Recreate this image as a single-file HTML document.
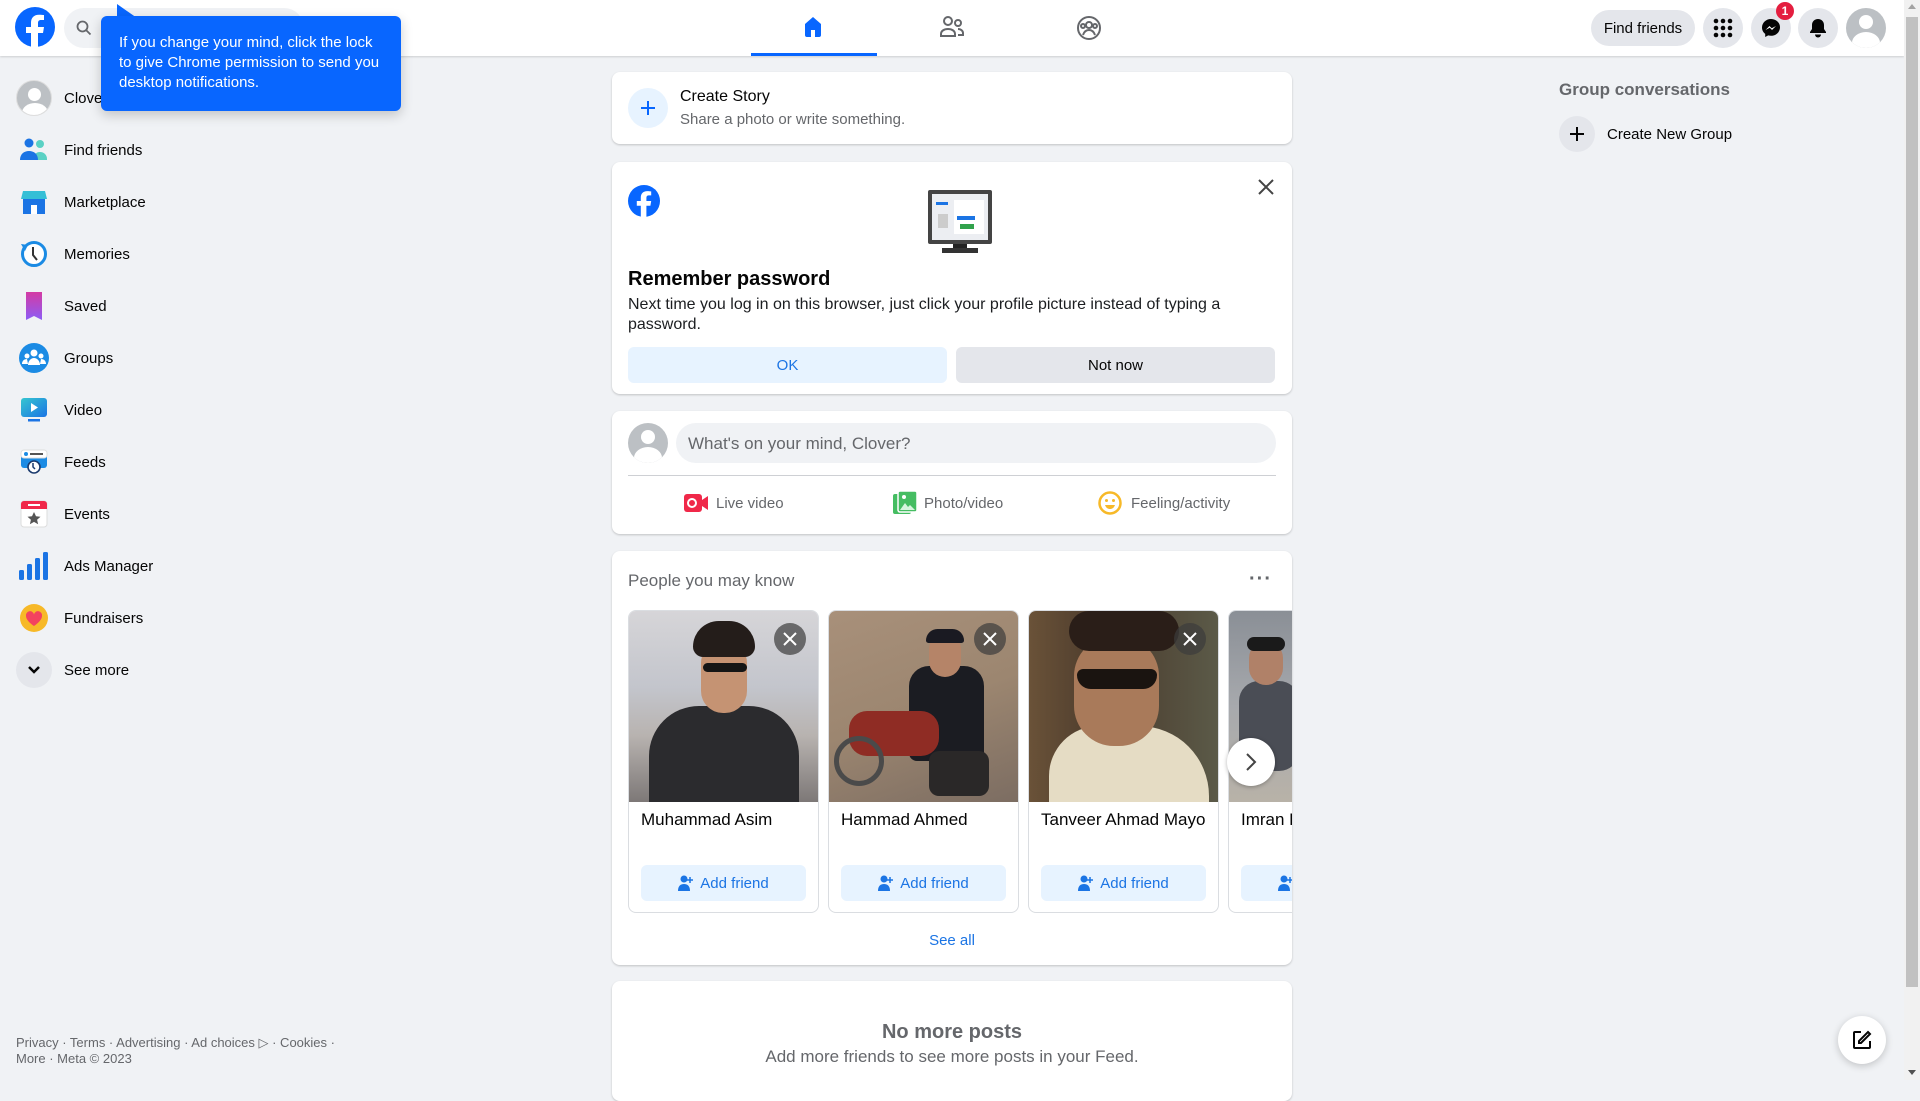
<!DOCTYPE html>
<html><head><meta charset="utf-8"><style>
*{box-sizing:border-box;margin:0;padding:0}
body{width:1920px;height:1080px;overflow:hidden;background:#f0f2f5;font-family:"Liberation Sans",sans-serif;color:#050505;position:relative}
.a{position:absolute}
.hdr{left:0;top:0;width:1904px;height:56px;background:#fff;box-shadow:0 1px 2px rgba(0,0,0,.15)}
.circ{border-radius:50%;background:#e4e6eb;width:40px;height:40px;display:flex;align-items:center;justify-content:center}
.card{background:#fff;border-radius:8px;box-shadow:0 1px 2px rgba(0,0,0,.2);left:612px;width:680px}
.side{left:16px;height:52px;display:flex;align-items:center;font-size:15px}
.side .ic{width:36px;height:36px;margin-right:12px;display:flex;align-items:center;justify-content:center}
.pc{top:610px;width:191px;height:303px;border:1px solid #dadde1;border-radius:8px;overflow:hidden;background:#fff}
.pc .img{height:191px;position:relative;overflow:hidden}
.pc .nm{font-size:17px;padding:8px 12px;white-space:nowrap}
.pc .btn{position:absolute;left:12px;right:12px;top:254px;height:36px;background:#e7f3ff;border-radius:6px;color:#1b74e4;font-size:15px;display:flex;align-items:center;justify-content:center;gap:6px}
.x{position:absolute;right:12px;top:12px;width:32px;height:32px;border-radius:50%;background:rgba(60,60,60,.7);display:flex;align-items:center;justify-content:center}
.act{font-size:15px;color:#65676b}
</style></head><body>

<div class="a hdr"></div>
<svg class="a" style="left:15px;top:7px" width="40" height="40" viewBox="0 0 40 40"><circle cx="20" cy="20" r="20" fill="#0866ff"/><path d="M23 40V26h5l1-6h-6v-4c0-2 1-3 3-3h3V8c-1 0-3-.3-5-.3-5 0-8 3-8 8V20h-5v6h5v14z" fill="#fff"/></svg>
<div class="a" style="left:64px;top:8px;width:240px;height:40px;border-radius:20px;background:#f0f2f5"></div>
<svg class="a" style="left:76px;top:20px" width="16" height="16" viewBox="0 0 16 16"><circle cx="6.5" cy="6.5" r="5" fill="none" stroke="#65676b" stroke-width="1.8"/><path d="M10 10l4.5 4.5" stroke="#65676b" stroke-width="1.8"/></svg>

<div class="a" style="left:751px;top:53px;width:126px;height:3px;background:#0866ff"></div>
<svg class="a" style="left:801px;top:15px" width="24" height="24" viewBox="0 0 24 24"><path d="M12 2 4 9v11a2 2 0 0 0 2 2h4v-6h4v6h4a2 2 0 0 0 2-2V9z" fill="#0866ff"/><rect x="10" y="15" width="4" height="7" fill="#fff"/></svg>
<svg class="a" style="left:939px;top:15px" width="26" height="24" viewBox="0 0 26 24" fill="none" stroke="#65676b" stroke-width="2"><circle cx="9" cy="6" r="4"/><path d="M2 21v-2c0-3 3-5 7-5s7 2 7 5v2z"/><circle cx="19" cy="8" r="3"/><path d="M19 14c3 0 5 2 5 4v2h-5"/></svg>
<svg class="a" style="left:1076px;top:15px" width="26" height="26" viewBox="0 0 26 26" fill="none" stroke="#65676b" stroke-width="2"><circle cx="13" cy="13" r="11"/><circle cx="13" cy="10" r="3"/><circle cx="7" cy="11" r="2"/><circle cx="19" cy="11" r="2"/><path d="M7 20c1-3 3-5 6-5s5 2 6 5"/></svg>

<div class="a" style="left:1591px;top:10px;width:104px;height:36px;border-radius:18px;background:#e4e6eb;font-size:15px;display:flex;align-items:center;justify-content:center">Find friends</div>
<div class="a circ" style="left:1703px;top:8px"><svg width="20" height="20" viewBox="0 0 20 20" fill="#050505"><circle cx="3" cy="3" r="2.3"/><circle cx="10" cy="3" r="2.3"/><circle cx="17" cy="3" r="2.3"/><circle cx="3" cy="10" r="2.3"/><circle cx="10" cy="10" r="2.3"/><circle cx="17" cy="10" r="2.3"/><circle cx="3" cy="17" r="2.3"/><circle cx="10" cy="17" r="2.3"/><circle cx="17" cy="17" r="2.3"/></svg></div>
<div class="a circ" style="left:1751px;top:8px"><svg width="20" height="20" viewBox="0 0 20 20"><path d="M10 1C5 1 1 4.8 1 9.5c0 2.6 1.2 4.9 3.2 6.4V19l3-1.6c.9.2 1.8.4 2.8.4 5 0 9-3.8 9-8.5S15 1 10 1z" fill="#050505"/><path d="M4.5 12l4-4 2.2 2.2L15 8l-4 4-2.2-2.2z" fill="#fff"/></svg></div>
<div class="a" style="left:1776px;top:2px;width:18px;height:18px;border-radius:50%;background:#e41e3f;color:#fff;font-size:12px;font-weight:bold;display:flex;align-items:center;justify-content:center">1</div>
<div class="a circ" style="left:1798px;top:8px"><svg width="20" height="20" viewBox="0 0 20 20" fill="#050505"><path d="M10 1c-3.5 0-6 2.6-6 6v4l-2 3v1h16v-1l-2-3V7c0-3.4-2.5-6-6-6z"/><path d="M7 16.5a3 3 0 0 0 6 0z"/></svg></div>
<div class="a" style="left:1846px;top:8px;width:40px;height:40px;border-radius:50%;background:#bcc0c4;overflow:hidden"><div class="a" style="left:13px;top:7px;width:14px;height:14px;border-radius:50%;background:#fff"></div><div class="a" style="left:6px;top:24px;width:28px;height:22px;border-radius:50%;background:#fff"></div></div>

<div class="a" style="left:1904px;top:0;width:16px;height:1080px;background:#f1f1f1"></div>
<div class="a" style="left:1906px;top:17px;width:12px;height:970px;background:#c1c1c1"></div>
<div class="a" style="left:1908px;top:4px;width:0;height:0;border-left:4px solid transparent;border-right:4px solid transparent;border-bottom:5px solid #a3a3a3"></div>
<div class="a" style="left:1908px;top:1070px;width:0;height:0;border-left:4px solid transparent;border-right:4px solid transparent;border-top:5px solid #505050"></div>

<div class="a side" style="top:72px"><div class="ic"><div style="width:36px;height:36px;border-radius:50%;background:#bcc0c4;position:relative;overflow:hidden;border:1px solid #ddd"><div class="a" style="left:11px;top:7px;width:13px;height:13px;border-radius:50%;background:#fff"></div><div class="a" style="left:5px;top:22px;width:26px;height:20px;border-radius:50%;background:#fff"></div></div></div>Clover</div>
<div class="a side" style="top:124px"><div class="ic"><svg width="28" height="24" viewBox="0 0 28 24"><circle cx="20" cy="6" r="4" fill="#5ad1c4"/><path d="M13 22c0-5 3-8 7-8s7 3 7 7v1z" fill="#5ad1c4"/><circle cx="9" cy="5" r="4.5" fill="#1b74e4"/><path d="M0 22c0-6 4-9 9-9s9 3 9 9z" fill="#1b74e4"/></svg></div>Find friends</div>
<div class="a side" style="top:176px"><div class="ic"><svg width="26" height="26" viewBox="0 0 26 26"><path d="M2 2h22l2 8H0z" fill="#35bfd6"/><rect x="2" y="10" width="22" height="15" fill="#1b74e4"/><rect x="10" y="16" width="6" height="9" fill="#fff"/></svg></div>Marketplace</div>
<div class="a side" style="top:228px"><div class="ic"><svg width="28" height="28" viewBox="0 0 28 28"><circle cx="14" cy="14" r="11.5" fill="#fff" stroke="#1b8be4" stroke-width="3"/><path d="M13 7v8l4 5" stroke="#333" stroke-width="2" fill="none"/><path d="M1 4l7 1-3 6z" fill="#1b8be4"/></svg></div>Memories</div>
<div class="a side" style="top:280px"><div class="ic"><svg width="20" height="28" viewBox="0 0 20 28"><defs><linearGradient id="sv" x1="0" y1="0" x2="0" y2="1"><stop offset="0" stop-color="#d43ba4"/><stop offset="1" stop-color="#8c5cf6"/></linearGradient></defs><path d="M2 0h16v28l-8-4-8 4z" fill="url(#sv)"/></svg></div>Saved</div>
<div class="a side" style="top:332px"><div class="ic"><svg width="30" height="30" viewBox="0 0 30 30"><circle cx="15" cy="15" r="15" fill="#1b8be4"/><circle cx="15" cy="10" r="3.5" fill="#fff"/><circle cx="8" cy="13" r="2.5" fill="#fff"/><circle cx="22" cy="13" r="2.5" fill="#fff"/><path d="M9 22c0-4 3-7 6-7s6 3 6 7z" fill="#fff"/><path d="M3 21c0-3 2-5 5-5l1 5z M27 21c0-3-2-5-5-5l-1 5z" fill="#fff"/></svg></div>Groups</div>
<div class="a side" style="top:384px"><div class="ic"><svg width="28" height="26" viewBox="0 0 28 26"><defs><linearGradient id="vd" x1="0" y1="0" x2="1" y2="1"><stop offset="0" stop-color="#35c6d0"/><stop offset="1" stop-color="#1b74e4"/></linearGradient></defs><rect x="1" y="1" width="26" height="19" rx="3" fill="url(#vd)"/><path d="M11 6v9l7-4.5z" fill="#fff"/><rect x="8" y="22" width="12" height="2.5" fill="#1b74e4"/></svg></div>Video</div>
<div class="a side" style="top:436px"><div class="ic"><svg width="28" height="28" viewBox="0 0 28 28"><rect x="1" y="2" width="26" height="18" rx="3" fill="#1b8be4"/><rect x="1" y="2" width="26" height="8" rx="3" fill="#fff" stroke="#ddd"/><circle cx="6" cy="6" r="2" fill="#1b8be4"/><rect x="10" y="5" width="13" height="2" fill="#555"/><circle cx="14" cy="19" r="6" fill="#fff" stroke="#1c3b6e" stroke-width="1.6"/><path d="M13 15v4l2 2" stroke="#1c3b6e" stroke-width="1.5" fill="none"/></svg></div>Feeds</div>
<div class="a side" style="top:488px"><div class="ic"><svg width="28" height="28" viewBox="0 0 28 28"><rect x="1" y="1" width="26" height="26" rx="3" fill="#fff" stroke="#ddd"/><path d="M1 4a3 3 0 0 1 3-3h20a3 3 0 0 1 3 3v5H1z" fill="#f02849"/><rect x="8" y="4" width="12" height="2" fill="#fff"/><path d="M14 12l2 4.3 4.5.5-3.4 3 1 4.5-4.1-2.4-4.1 2.4 1-4.5-3.4-3 4.5-.5z" fill="#555"/></svg></div>Events</div>
<div class="a side" style="top:540px"><div class="ic"><svg width="30" height="28" viewBox="0 0 30 28" fill="#1b74e4"><rect x="0" y="18" width="5" height="10" rx="1.5"/><rect x="8" y="12" width="5" height="16" rx="1.5"/><rect x="16" y="6" width="5" height="22" rx="1.5"/><rect x="24" y="0" width="5" height="28" rx="1.5"/></svg></div>Ads Manager</div>
<div class="a side" style="top:592px"><div class="ic"><svg width="30" height="30" viewBox="0 0 30 30"><circle cx="15" cy="15" r="14" fill="#f7b928"/><path d="M15 23s-8-5-8-10a4 4 0 0 1 8-1.5A4 4 0 0 1 23 13c0 5-8 10-8 10z" fill="#f3425f"/></svg></div>Fundraisers</div>
<div class="a side" style="top:644px"><div class="ic"><div class="circ" style="width:36px;height:36px"><svg width="14" height="10" viewBox="0 0 14 10"><path d="M2 2l5 5 5-5" stroke="#050505" stroke-width="2.5" fill="none"/></svg></div></div>See more</div>

<div class="a" style="left:16px;top:1035px;font-size:13px;color:#65676b;line-height:16px">Privacy · Terms · Advertising · Ad choices ▷ · Cookies ·<br>More · Meta © 2023</div>

<div class="a" style="left:117px;top:4px;width:20px;height:14px;background:#0866ff;clip-path:polygon(0 0,0 100%,100% 100%)"></div>
<div class="a" style="left:101px;top:16px;width:300px;height:95px;background:#0866ff;border-radius:6px;box-shadow:0 4px 12px rgba(0,0,0,.2);color:#fff;font-size:15px;line-height:20px;padding:17px 18px">If you change your mind, click the lock to give Chrome permission to send you desktop notifications.</div>

<div class="a" style="left:1559px;top:80px;font-size:17px;font-weight:bold;color:#65676b">Group conversations</div>
<div class="a circ" style="left:1559px;top:116px;width:36px;height:36px"><svg width="16" height="16" viewBox="0 0 16 16"><path d="M8 1v14M1 8h14" stroke="#050505" stroke-width="2"/></svg></div>
<div class="a" style="left:1607px;top:126px;font-size:15px">Create New Group</div>

<div class="a" style="left:1838px;top:1016px;width:48px;height:48px;border-radius:50%;background:#fff;box-shadow:0 2px 8px rgba(0,0,0,.2);display:flex;align-items:center;justify-content:center"><svg width="20" height="20" viewBox="0 0 20 20" fill="none" stroke="#050505" stroke-width="2"><path d="M9 2H3a1 1 0 0 0-1 1v14a1 1 0 0 0 1 1h14a1 1 0 0 0 1-1v-6"/><path d="M16 2l2 2-9 9H7v-2z"/></svg></div>

<div class="a card" style="top:72px;height:72px"></div>
<div class="a" style="left:628px;top:88px;width:40px;height:40px;border-radius:50%;background:#e7f3ff;display:flex;align-items:center;justify-content:center"><svg width="16" height="16" viewBox="0 0 16 16"><path d="M8 1v14M1 8h14" stroke="#0866ff" stroke-width="2"/></svg></div>
<div class="a" style="left:680px;top:88px;font-size:16px">Create Story</div>
<div class="a" style="left:680px;top:111px;font-size:15px;color:#65676b">Share a photo or write something.</div>

<div class="a card" style="top:162px;height:232px"></div>
<svg class="a" style="left:628px;top:185px" width="32" height="32" viewBox="0 0 40 40"><circle cx="20" cy="20" r="20" fill="#0866ff"/><path d="M23 40V26h5l1-6h-6v-4c0-2 1-3 3-3h3V8c-1 0-3-.3-5-.3-5 0-8 3-8 8V20h-5v6h5v14z" fill="#fff"/></svg>
<svg class="a" style="left:926px;top:188px" width="68" height="68" viewBox="0 0 68 68"><rect x="2" y="2" width="64" height="54" rx="2" fill="#444"/><rect x="6" y="6" width="56" height="46" fill="#eceef2"/><rect x="10" y="14" width="12" height="3" fill="#1b74e4"/><rect x="12" y="26" width="10" height="14" fill="#ccc"/><rect x="28" y="12" width="30" height="34" fill="#fff"/><rect x="31" y="28" width="18" height="4" fill="#1b74e4"/><rect x="34" y="36" width="14" height="5" fill="#31a24c"/><rect x="27" y="56" width="14" height="4" fill="#222"/><rect x="16" y="60" width="36" height="5" fill="#333"/></svg>
<svg class="a" style="left:1257px;top:178px" width="18" height="18" viewBox="0 0 18 18"><path d="M2 2l14 14M16 2 2 16" stroke="#444" stroke-width="2"/></svg>
<div class="a" style="left:628px;top:268px;font-size:20px;font-weight:bold">Remember password</div>
<div class="a" style="left:628px;top:295px;width:700px;font-size:16px;line-height:20px;color:#1c1e21;white-space:nowrap">Next time you log in on this browser, just click your profile picture instead of typing a<br>password.</div>
<div class="a" style="left:628px;top:347px;width:319px;height:36px;border-radius:6px;background:#e7f3ff;color:#1b74e4;font-size:15px;display:flex;align-items:center;justify-content:center">OK</div>
<div class="a" style="left:956px;top:347px;width:319px;height:36px;border-radius:6px;background:#e4e6eb;font-size:15px;display:flex;align-items:center;justify-content:center">Not now</div>

<div class="a card" style="top:411px;height:123px"></div>
<div class="a" style="left:628px;top:423px;width:40px;height:40px;border-radius:50%;background:#bcc0c4;overflow:hidden"><div class="a" style="left:13px;top:7px;width:14px;height:14px;border-radius:50%;background:#fff"></div><div class="a" style="left:6px;top:24px;width:28px;height:22px;border-radius:50%;background:#fff"></div></div>
<div class="a" style="left:676px;top:423px;width:600px;height:40px;border-radius:20px;background:#f0f2f5;color:#65676b;font-size:17px;padding:11px 12px">What's on your mind, Clover?</div>
<div class="a" style="left:628px;top:475px;width:648px;height:1px;background:#ced0d4"></div>
<svg class="a" style="left:684px;top:493px" width="25" height="20" viewBox="0 0 25 20"><rect x="0" y="1" width="18" height="18" rx="3" fill="#f02849"/><circle cx="8" cy="10" r="4" fill="none" stroke="#fff" stroke-width="2"/><path d="M18 7l6-4v14l-6-4z" fill="#f02849"/></svg>
<div class="a act" style="left:716px;top:495px">Live video</div>
<svg class="a" style="left:893px;top:491px" width="24" height="24" viewBox="0 0 24 24"><rect x="0" y="3" width="18" height="20" rx="2" fill="#45bd62"/><rect x="5" y="0" width="19" height="21" rx="2" fill="#45bd62" stroke="#fff" stroke-width="1.5"/><circle cx="11" cy="6" r="2" fill="#fff"/><path d="M7 19l5-7 3 4 2-2 5 5z" fill="#d5f5dd"/></svg>
<div class="a act" style="left:924px;top:495px">Photo/video</div>
<svg class="a" style="left:1098px;top:491px" width="24" height="24" viewBox="0 0 24 24"><circle cx="12" cy="12" r="10.5" fill="#fff" stroke="#f7b928" stroke-width="2.5"/><circle cx="8.5" cy="9.5" r="1.5" fill="#f7b928"/><circle cx="15.5" cy="9.5" r="1.5" fill="#f7b928"/><path d="M7 14c1 3 3 4 5 4s4-1 5-4z" fill="#f7b928"/></svg>
<div class="a act" style="left:1131px;top:495px">Feeling/activity</div>

<div class="a card" style="top:551px;height:414px;overflow:hidden">
  <div class="a" style="left:16px;top:20px;font-size:17px;color:#65676b">People you may know</div>
  <div class="a" style="left:637px;top:17px;font-size:20px;color:#65676b;font-weight:bold;letter-spacing:1px">···</div>

  <div class="a pc" style="left:16px;top:59px"><div class="img" style="background:linear-gradient(180deg,#d6d5d8 0%,#c3c5cc 40%,#b8b3b0 65%,#7d7877 100%)">
    <div class="a" style="left:20px;top:95px;width:150px;height:110px;background:#2b2b2e;border-radius:50px 50px 0 0"></div>
    <div class="a" style="left:72px;top:30px;width:46px;height:72px;background:#c59373;border-radius:22px"></div>
    <div class="a" style="left:64px;top:10px;width:62px;height:36px;background:#241d1a;border-radius:30px 30px 12px 12px"></div>
    <div class="a" style="left:74px;top:52px;width:44px;height:9px;background:#151515;border-radius:5px"></div>
    <div class="x"><svg width="14" height="14" viewBox="0 0 14 14"><path d="M1 1l12 12M13 1 1 13" stroke="#fff" stroke-width="2"/></svg></div></div>
    <div class="nm">Muhammad Asim</div><div class="btn"><svg width="16" height="16" viewBox="0 0 16 16" fill="#1b74e4"><circle cx="6" cy="4" r="3.5"/><path d="M0 16c0-5 2.5-7 6-7s6 2 6 7z"/><path d="M12 2v6M9 5h6" stroke="#1b74e4" stroke-width="1.5"/></svg>Add friend</div></div>

  <div class="a pc" style="left:216px;top:59px"><div class="img" style="background:linear-gradient(160deg,#a8907a 0%,#9c8670 50%,#7c6d62 100%)">
    <div class="a" style="left:80px;top:55px;width:75px;height:95px;background:#1b1c22;border-radius:20px 20px 8px 8px"></div>
    <div class="a" style="left:100px;top:22px;width:32px;height:44px;background:#b58468;border-radius:16px"></div>
    <div class="a" style="left:97px;top:18px;width:38px;height:14px;background:#1a1a22;border-radius:18px 18px 4px 4px"></div>
    <div class="a" style="left:20px;top:100px;width:90px;height:45px;background:#8f2c24;border-radius:18px"></div>
    <div class="a" style="left:5px;top:125px;width:50px;height:50px;border-radius:50%;border:5px solid #4a4a4a"></div>
    <div class="a" style="left:100px;top:140px;width:60px;height:45px;background:#2a2828;border-radius:10px"></div>
    <div class="x"><svg width="14" height="14" viewBox="0 0 14 14"><path d="M1 1l12 12M13 1 1 13" stroke="#fff" stroke-width="2"/></svg></div></div>
    <div class="nm">Hammad Ahmed</div><div class="btn"><svg width="16" height="16" viewBox="0 0 16 16" fill="#1b74e4"><circle cx="6" cy="4" r="3.5"/><path d="M0 16c0-5 2.5-7 6-7s6 2 6 7z"/><path d="M12 2v6M9 5h6" stroke="#1b74e4" stroke-width="1.5"/></svg>Add friend</div></div>

  <div class="a pc" style="left:416px;top:59px"><div class="img" style="background:linear-gradient(90deg,#6a5238 0%,#4a3a2c 40%,#5b5a48 100%)">
    <div class="a" style="left:20px;top:115px;width:160px;height:90px;background:#e5dcc4;border-radius:50px 70px 0 0"></div>
    <div class="a" style="left:45px;top:25px;width:85px;height:110px;background:#a97a5a;border-radius:40px"></div>
    <div class="a" style="left:40px;top:0px;width:110px;height:40px;background:#2a1e18;border-radius:25px"></div>
    <div class="a" style="left:48px;top:58px;width:80px;height:20px;background:#1a1410;border-radius:8px 8px 18px 18px"></div>
    <div class="x"><svg width="14" height="14" viewBox="0 0 14 14"><path d="M1 1l12 12M13 1 1 13" stroke="#fff" stroke-width="2"/></svg></div></div>
    <div class="nm">Tanveer Ahmad Mayo</div><div class="btn"><svg width="16" height="16" viewBox="0 0 16 16" fill="#1b74e4"><circle cx="6" cy="4" r="3.5"/><path d="M0 16c0-5 2.5-7 6-7s6 2 6 7z"/><path d="M12 2v6M9 5h6" stroke="#1b74e4" stroke-width="1.5"/></svg>Add friend</div></div>

  <div class="a pc" style="left:616px;top:59px"><div class="img" style="background:linear-gradient(180deg,#8a8f96 0%,#a7a9ad 50%,#b8b2a8 100%)">
    <div class="a" style="left:10px;top:70px;width:60px;height:90px;background:#4a4d55;border-radius:20px"></div>
    <div class="a" style="left:20px;top:30px;width:34px;height:44px;background:#b08168;border-radius:17px"></div>
    <div class="a" style="left:18px;top:26px;width:38px;height:14px;background:#1a1a1a;border-radius:18px"></div></div>
    <div class="nm">Imran Khan</div><div class="btn"><svg width="16" height="16" viewBox="0 0 16 16" fill="#1b74e4"><circle cx="6" cy="4" r="3.5"/><path d="M0 16c0-5 2.5-7 6-7s6 2 6 7z"/><path d="M12 2v6M9 5h6" stroke="#1b74e4" stroke-width="1.5"/></svg>Add friend</div></div>

  <div class="a" style="left:615px;top:187px;width:48px;height:48px;border-radius:50%;background:#fff;box-shadow:0 1px 4px rgba(0,0,0,.3);display:flex;align-items:center;justify-content:center"><svg width="12" height="20" viewBox="0 0 12 20"><path d="M2 2l8 8-8 8" stroke="#444" stroke-width="2" fill="none"/></svg></div>
  <div class="a" style="left:0;top:381px;width:680px;text-align:center;font-size:15px;color:#1b74e4">See all</div>
</div>

<div class="a card" style="top:981px;height:120px"></div>
<div class="a" style="left:612px;top:1021px;width:680px;text-align:center;font-size:20px;font-weight:bold;color:#65676b">No more posts</div>
<div class="a" style="left:612px;top:1047px;width:680px;text-align:center;font-size:17px;color:#65676b">Add more friends to see more posts in your Feed.</div>

</body></html>
